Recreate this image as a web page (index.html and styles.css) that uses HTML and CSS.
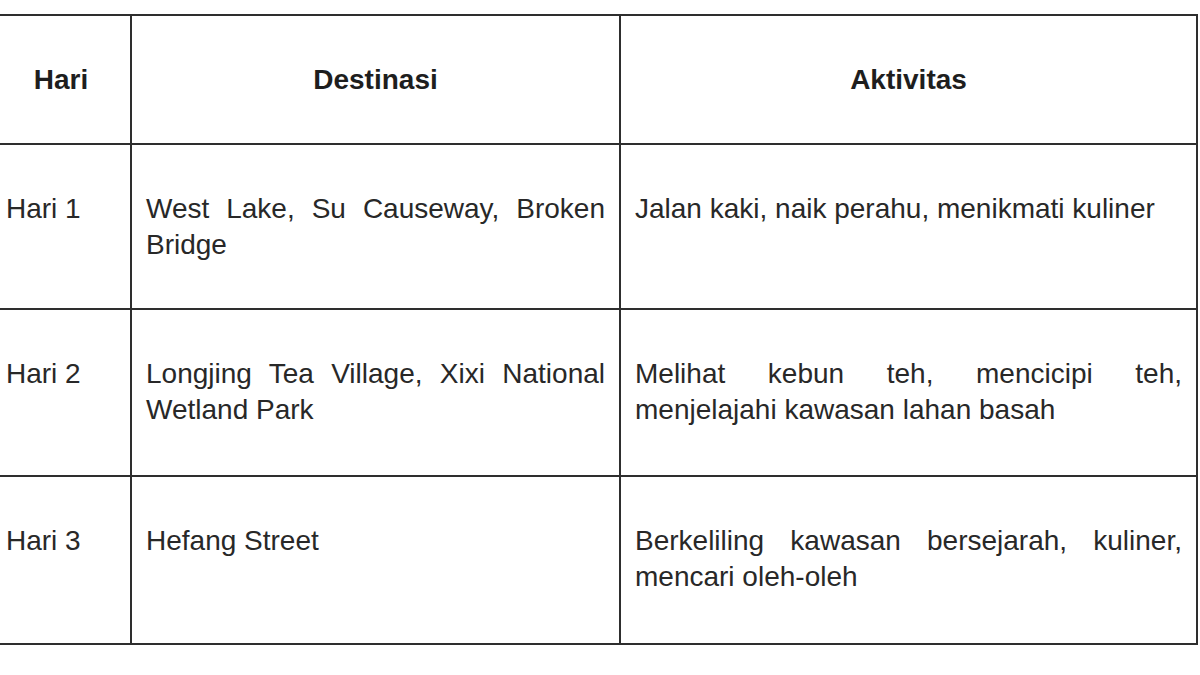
FILE: index.html
```html
<!DOCTYPE html>
<html lang="id">
<head>
<meta charset="utf-8">
<link rel="stylesheet" href="styles.css">
</head>
<body>
<div class="page">
<table class="itin">
  <colgroup>
    <col class="c-day">
    <col class="c-dest">
    <col class="c-act">
  </colgroup>
  <thead>
    <tr class="head-row">
      <th>Hari</th>
      <th>Destinasi</th>
      <th>Aktivitas</th>
    </tr>
  </thead>
  <tbody>
    <tr class="r1">
      <td>Hari 1</td>
      <td>West Lake, Su Causeway, Broken Bridge</td>
      <td>Jalan kaki, naik perahu, menikmati kuliner</td>
    </tr>
    <tr class="r2">
      <td>Hari 2</td>
      <td>Longjing Tea Village, Xixi National Wetland Park</td>
      <td>Melihat kebun teh, mencicipi teh, menjelajahi kawasan lahan basah</td>
    </tr>
    <tr class="r3">
      <td>Hari 3</td>
      <td>Hefang Street</td>
      <td>Berkeliling kawasan bersejarah, kuliner, mencari oleh-oleh</td>
    </tr>
  </tbody>
</table>
</div>
</body>
</html>
```

FILE: styles.css
```css
html, body {
  margin: 0;
  padding: 0;
  background: #ffffff;
}
body {
  width: 1200px;
  height: 675px;
  overflow: hidden;
  font-family: "Liberation Sans", Arial, sans-serif;
  color: #282828;
}
.page {
  padding-top: 14px;
  margin-left: -10px;
}
.itin {
  border-collapse: collapse;
  table-layout: fixed;
  width: 1206px;
}
.c-day { width: 140px; }
.c-dest { width: 489px; }
.c-act { width: 577px; }
.itin th,
.itin td {
  border: 2px solid #2e2e2e;
  font-size: 28px;
  line-height: 36px;
  padding: 0 14px;
}
.itin th {
  height: 127px;
  font-weight: bold;
  text-align: center;
  vertical-align: middle;
  color: #1e1e1e;
}
.itin td {
  vertical-align: top;
  text-align: justify;
  padding-top: 46px;
  padding-bottom: 0;
}
.itin td:first-child {
  text-align: left;
}
.r1 td { height: 117px; }
.r2 td { height: 119px; }
.r3 td { height: 120px; }
```
